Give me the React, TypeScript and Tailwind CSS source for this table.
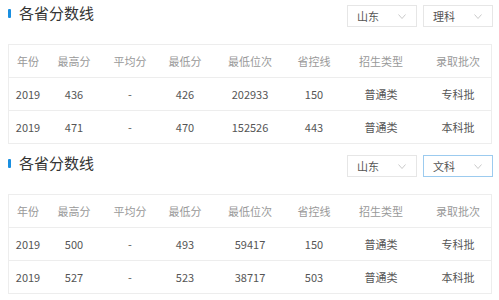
import React from 'react'

type Row = string[]

const headers = ['年份', '最高分', '平均分', '最低分', '最低位次', '省控线', '招生类型', '录取批次']

const sections: { type: string; focused: boolean; rows: Row[] }[] = [
  {
    type: '理科',
    focused: false,
    rows: [
      ['2019', '436', '-', '426', '202933', '150', '普通类', '专科批'],
      ['2019', '471', '-', '470', '152526', '443', '普通类', '本科批'],
    ],
  },
  {
    type: '文科',
    focused: true,
    rows: [
      ['2019', '500', '-', '493', '59417', '150', '普通类', '专科批'],
      ['2019', '527', '-', '523', '38717', '503', '普通类', '本科批'],
    ],
  },
]

const cols = 'grid grid-cols-[38px_54px_58px_52px_78px_50px_84px_70px]'

const Chevron = () => (
  <svg width="8" height="5" viewBox="0 0 8 5" fill="none" className="shrink-0">
    <polyline points="0.5,0.5 4,4.5 7.5,0.5" stroke="#c4c4c4" strokeWidth="0.9" />
  </svg>
)

const Select = ({ label, focused }: { label: string; focused?: boolean }) => (
  <div
    className={`flex items-center justify-between w-[70px] h-[22px] pl-[9px] pr-[10px] bg-white border ${
      focused ? 'border-[#9ccbef]' : 'border-[#e6e6e6]'
    }`}
  >
    <span className="text-[11px] leading-none text-[#555]">{label}</span>
    <Chevron />
  </div>
)

const Section = ({ type, focused, rows }: { type: string; focused: boolean; rows: Row[] }) => (
  <div className="h-[150px] pt-[5px] pl-[8px] pr-[6px]">
    <div className="flex items-start justify-between h-[22px]">
      <div className="flex items-center gap-[8px] h-[16px]">
        <span className="w-[3px] h-[9px] rounded-[1px] bg-[#1a8fe0]" />
        <span className="text-[15px] leading-[16px] text-[#333]">各省分数线</span>
      </div>
      <div className="flex gap-[6px]">
        <Select label="山东" />
        <Select label={type} focused={focused} />
      </div>
    </div>
    <div className="mt-[17px] mr-[1px] border-t border-l border-r border-[#ededed]">
      <div className={`${cols} h-[33px] items-center border-b border-[#ededed] text-[11px] text-[#999]`}>
        {headers.map((h) => (
          <div key={h} className="text-center whitespace-nowrap">{h}</div>
        ))}
      </div>
      {rows.map((r, i) => (
        <div key={i} className={`${cols} h-[33px] items-center border-b border-[#ededed] text-[11px] text-[#555]`}>
          {r.map((c, j) => (
            <div key={j} className="text-center whitespace-nowrap">{c}</div>
          ))}
        </div>
      ))}
    </div>
  </div>
)

export default function App() {
  return (
    <div
      className="w-[499px] h-[300px] overflow-hidden bg-white"
      style={{ fontFamily: '"Noto Sans CJK SC", "Noto Sans", sans-serif' }}
    >
      {sections.map((s, i) => (
        <Section key={i} {...s} />
      ))}
    </div>
  )
}
